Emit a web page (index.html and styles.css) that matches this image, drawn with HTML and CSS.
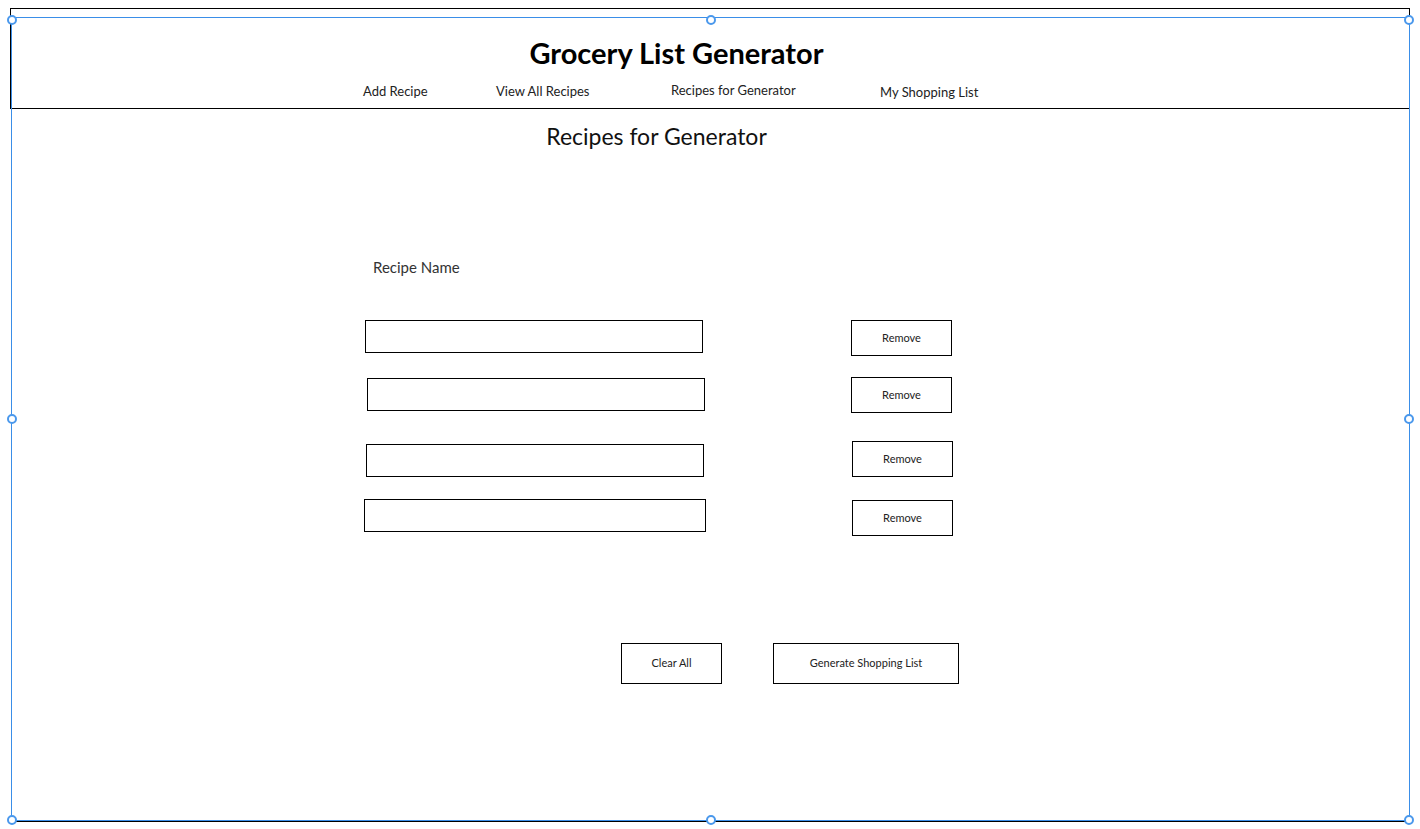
FILE: index.html
```html
<!DOCTYPE html>
<html>
<head>
<meta charset="utf-8">
<title>Grocery List Generator</title>
<link rel="stylesheet" href="styles.css">
</head>
<body>
<div class="canvas">
  <header class="header">
    <h1 class="title">Grocery List Generator</h1>
    <nav class="nav">
      <a class="nav-item nav-add">Add Recipe</a>
      <a class="nav-item nav-view">View All Recipes</a>
      <a class="nav-item nav-gen">Recipes for Generator</a>
      <a class="nav-item nav-shop">My Shopping List</a>
    </nav>
  </header>
  <main class="content">
    <h2 class="page-title">Recipes for Generator</h2>
    <section class="form">
      <div class="label">Recipe Name</div>
      <div class="row row-1"><div class="field"></div><button class="btn btn-remove">Remove</button></div>
      <div class="row row-2"><div class="field"></div><button class="btn btn-remove">Remove</button></div>
      <div class="row row-3"><div class="field"></div><button class="btn btn-remove">Remove</button></div>
      <div class="row row-4"><div class="field"></div><button class="btn btn-remove">Remove</button></div>
      <div class="actions">
        <button class="btn btn-clear">Clear All</button>
        <button class="btn btn-generate">Generate Shopping List</button>
      </div>
    </section>
  </main>
  <div class="selection">
    <span class="handle h-tl"></span>
    <span class="handle h-tc"></span>
    <span class="handle h-tr"></span>
    <span class="handle h-ml"></span>
    <span class="handle h-mr"></span>
    <span class="handle h-bl"></span>
    <span class="handle h-bc"></span>
    <span class="handle h-br"></span>
  </div>
</div>
</body>
</html>
```

FILE: styles.css
```css
html, body {
  margin: 0;
  padding: 0;
  background: #fff;
  overflow: hidden;
}

.canvas {
  position: relative;
  width: 1420px;
  height: 829px;
  box-sizing: border-box;
  padding: 8px 0 0 10px;
  font-family: Lato, "Open Sans", "Liberation Sans", sans-serif;
  color: #222;
}

.header {
  box-sizing: border-box;
  width: 1400px;
  height: 101px;
  border: 1px solid #000;
  display: flex;
  flex-direction: column;
  align-items: center;
}

.title {
  margin: 27px 0 0 -67px;
  font-size: 29px;
  line-height: 34px;
  font-weight: 700;
  color: #000;
}

.nav {
  align-self: stretch;
  display: flex;
  align-items: flex-start;
  padding-left: 352px;
  margin-top: 11px;
  font-size: 13px;
  line-height: 18px;
  color: #222;
}

.nav-item { display: block; }
.nav-add { width: 133px; margin-top: 1px; }
.nav-view { width: 175px; margin-top: 1px; }
.nav-gen { width: 209px; }
.nav-shop { margin-top: 2px; }

.content {
  box-sizing: border-box;
  width: 1400px;
  height: 713px;
  border-right: 1px solid #000;
  border-bottom: 1px solid #000;
  display: flex;
  flex-direction: column;
}

.page-title {
  margin: 13px 0 0;
  padding-right: 106px;
  text-align: center;
  font-size: 23px;
  line-height: 28px;
  font-weight: 400;
  color: #111;
}

.form {
  display: flex;
  flex-direction: column;
  align-items: flex-start;
  padding-left: 354px;
}

.label {
  margin: 107px 0 0 9px;
  font-size: 15px;
  line-height: 20px;
  color: #333;
}

.row {
  display: flex;
  align-items: flex-start;
}

.field {
  box-sizing: border-box;
  width: 338px;
  height: 33px;
  border: 1px solid #000;
  background: #fff;
}

.btn {
  box-sizing: border-box;
  height: 36px;
  padding: 0 0 2px;
  border: 1px solid #000;
  background: #fff;
  font-family: Lato, "Open Sans", "Liberation Sans", sans-serif;
  font-size: 11px;
  color: #222;
  text-align: center;
}

.btn-remove { width: 101px; }

.row-1 { margin-top: 43px; }
.row-1 .field { margin-left: 1px; }
.row-1 .btn { margin-left: 148px; }

.row-2 { margin-top: 21px; }
.row-2 .field { margin: 1px 0 0 3px; }
.row-2 .btn { margin-left: 146px; }

.row-3 { margin-top: 28px; }
.row-3 .field { margin: 3px 0 0 2px; }
.row-3 .btn { margin-left: 148px; }

.row-4 { margin-top: 22px; }
.row-4 .field { width: 342px; }
.row-4 .btn { margin: 1px 0 0 146px; }

.actions {
  display: flex;
  gap: 51px;
  margin: 107px 0 0 257px;
}

.btn-clear { width: 101px; height: 41px; }
.btn-generate { width: 186px; height: 41px; }

.selection {
  position: absolute;
  left: 11px;
  top: 17px;
  width: 1399px;
  height: 804px;
  box-sizing: border-box;
  border: 1px solid #3a8ee8;
  pointer-events: none;
}

.handle {
  position: absolute;
  width: 10px;
  height: 10px;
  box-sizing: border-box;
  border: 2px solid #4a98ec;
  border-radius: 50%;
  background: #fff;
  margin: -5px 0 0 -5px;
}

.h-tl { left: 0; top: 2px; }
.h-tc { left: 50%; top: 2px; }
.h-tr { left: 100%; top: 2px; }
.h-ml { left: 0; top: 50%; }
.h-mr { left: 100%; top: 50%; }
.h-bl { left: 0; top: 100%; }
.h-bc { left: 50%; top: 100%; }
.h-br { left: 100%; top: 100%; }
```
